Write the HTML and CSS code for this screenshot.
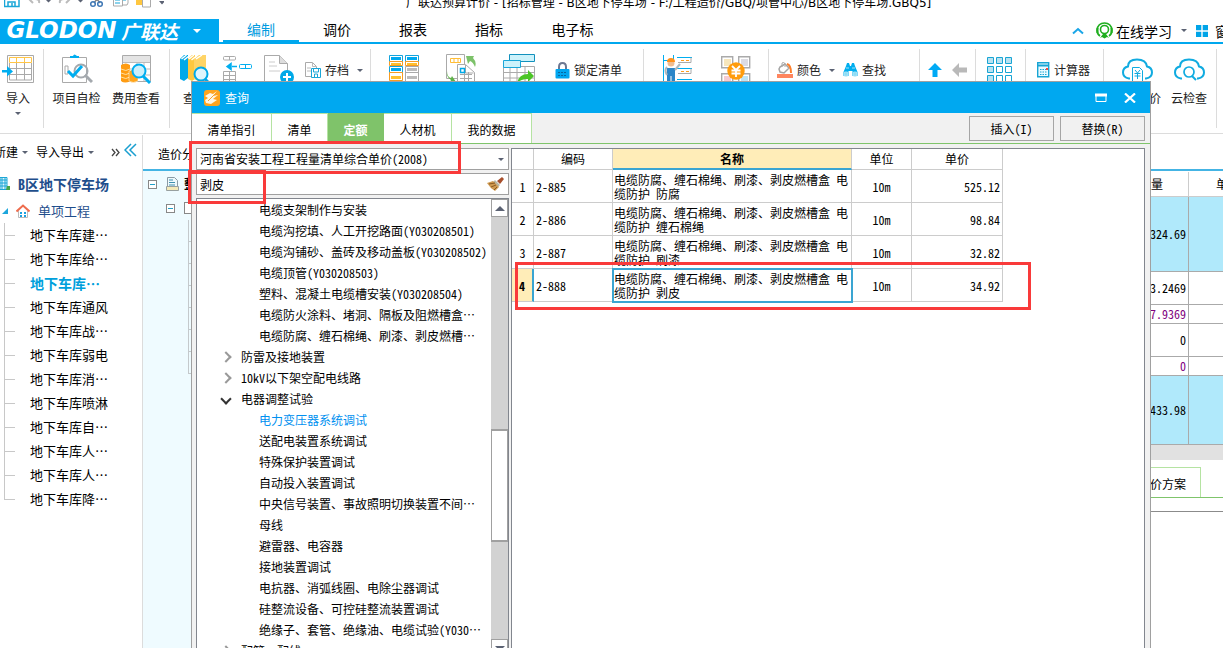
FILE: index.html
```html
<!DOCTYPE html>
<html lang="zh-CN">
<head>
<meta charset="utf-8">
<title>广联达预算计价</title>
<link rel="stylesheet" href="styles.css">
</head>
<body>
<div class="app">
  <header class="titlebar">
    <div class="quick">
      <svg width="160" height="10" viewBox="0 0 160 10" fill="none">
        <path d="M0 -7h15v13.500H0.500V-7" stroke="#19a6d8" stroke-width="1.500"/><path d="M1 -1h13M4 7V2h7v5M8 3v3" stroke="#19a6d8" stroke-width="1.500"/>
        <path d="M26 -1h5q5 0 4 4M29 -3l-3 3l3 3M65 -1h-5q-5 0-4 4M62 -3l3 3l-3 3" stroke="#bbb" stroke-width="2"/>
        <path d="M42 0h5l-2.500 2.500zM74 0h5l-2.500 2.500zM155 1h6l-3 3.500z" fill="#5b6273"/>
        <path d="M90 -5l6 8M96 -5l-6 8" stroke="#888" stroke-width="1.500"/><circle cx="89" cy="4" r="2.300" stroke="#3f78b5" stroke-width="1.500"/><circle cx="96" cy="4" r="2.300" stroke="#3f78b5" stroke-width="1.500"/>
        <path d="M109.500 -2v8h9V-2M118 5h5l1-2V-2" stroke="#aaa"/><path d="M111 0h5M111 3h5M119 0h3" stroke="#19a6d8"/>
        <path d="M132 -2h7v7h-7z" fill="#ffc740"/><path d="M138.500 -2v9h8V-2" stroke="#aaa" fill="#fff"/>
      </svg>
    </div>
    <div class="doc-title">广联达预算计价 - [招标管理 - B区地下停车场 - F:/工程造价/GBQ/项管中心/B区地下停车场.GBQ5]</div>
  </header>

  <nav class="menubar">
    <button class="brand"><span class="brand-en">Glodon</span><span class="brand-cn">广联达</span><i class="caret light"></i></button>
    <button class="menu active">编制</button><button class="menu">调价</button><button class="menu">报表</button><button class="menu">指标</button><button class="menu wide">电子标</button>
    <div class="menu-right">
      <svg width="12" height="8" viewBox="0 0 12 8" fill="none"><path d="M1 6.500L6 2l5 4.500" stroke="#1aa6e8" stroke-width="2"/></svg>
      <svg class="headset" width="17" height="18" viewBox="0 0 17 18" fill="none"><path d="M4 14q-3-2-3-6 1-7 7.500-7T16 8q0 4-3 6" stroke="#1fae1f" stroke-width="1.700"/><circle cx="8.500" cy="7.500" r="4" stroke="#1fae1f" stroke-width="1.600"/><path d="M1.500 6v5M15.500 6v5" stroke="#1fae1f" stroke-width="2"/><path d="M4 16l3-4h3l3 4-2-1-2.500 1.500L6 15z" fill="#1fae1f"/></svg>
      <button class="plain learn">在线学习</button><i class="caret"></i>
      <svg class="win" width="12" height="12" viewBox="0 0 12 12" fill="#00a4e8"><path d="M0 0h5.300v5.300H0zM6.700 0H12v5.300H6.700zM0 6.700h5.300V12H0zM6.700 6.700H12V12H6.700z"/></svg>
      <button class="plain window">窗口</button>
    </div>
  </nav>

  <div class="ribbon">
    <div class="group g-import">
      <button class="tool w36"><svg width="32" height="30" viewBox="0 0 32 30" fill="none"><path d="M5.500 1.500h26v27h-26z" fill="#fff" stroke="#a9a9a9"/><path d="M7.500 3.500h22v5h-22zM14.500 3v6M22.500 3v6" stroke="#ffc547"/><path d="M7.500 9v17h22V9M7 14.500h23M7 20.500h23M14.500 9v17M22.500 9v17" stroke="#a9a9a9"/><path d="M0 16h5v-4l6 5.500-6 5v-4H0z" fill="#00aef0"/></svg><span>导入</span><i class="caret"></i></button>
    </div>
    <div class="group g-check">
      <button class="tool w57"><svg width="32" height="30" viewBox="0 0 32 30" fill="none"><path d="M1.500 3.500h24v25h-24z" stroke="#aaa"/><path d="M9 4V2h3q1-3 4 0h2v2z" fill="#00aef0"/><path d="M4 12h3v8H4z" stroke="#aaa"/><circle cx="20" cy="17" r="6.500" stroke="#a4a9ae" stroke-width="2"/><path d="M24 21l7 7" stroke="#a4a9ae" stroke-width="3"/><path d="M7 17l5 5 9-10" stroke="#00aef0" stroke-width="3"/></svg><span>项目自检</span></button>
      <button class="tool w62"><svg width="32" height="30" viewBox="0 0 32 30" fill="none"><path d="M2.500 1.500h28v26h-28z" stroke="#aaa"/><path d="M3 2h27v6H3z" fill="#e4e4e4"/><path d="M3 8.500h27M17 8v19M24 8v19M3 15h27M3 21h27" stroke="#bbb"/><path d="M1 11q5-3 9 0v16q-5 3-9 0z" fill="#ff9c12"/><path d="M1 15q5 3 9 0M1 19q5 3 9 0M1 23q5 3 9 0" stroke="#ffe0a0"/><path d="M9 17q5-3 9 0v10q-5 3-9 0z" fill="#ffa51b" stroke="#fff" stroke-width=".5"/><circle cx="19" cy="17" r="6.500" fill="#cceffa" stroke="#00aef0" stroke-width="2"/><path d="M23 22l7 7" stroke="#00aef0" stroke-width="3"/></svg><span>费用查看</span></button>
    </div>
    <div class="group g-query">
      <button class="tool w50"><svg width="30" height="30" viewBox="0 0 30 30" fill="none"><path d="M0 5l4-4h4v23l-4 3-4-2z" fill="#00a9e8"/><path d="M8 5l4-4h3v24l-3 2-4-2z" fill="#ffc83e"/><path d="M14 5l5-4h7v22l-8 4-4-2z" fill="#ffd466"/><path d="M1.500 5l5-4M4 6l5-4M9 5l5-4M11.500 6l5-4M16 5l6-4" stroke="#fff" stroke-width="1.500"/><circle cx="21" cy="20" r="6.500" fill="#dff5fc" stroke="#00a9e8" stroke-width="2"/><path d="M25 25l4 4" stroke="#00a9e8" stroke-width="3"/></svg><span>查询</span></button>
      <button class="tool w36" aria-label="插入"><svg width="30" height="30" viewBox="0 0 30 30" fill="none"><rect x=".5" y="2.500" width="12" height="3.500" rx="1" stroke="#aaa"/><path d="M6.500 3v3" stroke="#aaa"/><path d="M.5 17.500h12v12H.5zM6.500 17.500v12M.5 21.500h12M.5 25.500h12" stroke="#aaa"/><path d="M9 12.500h5M4 12.500l4-3v6z" stroke="#00aef0" stroke-width="1.500" fill="#00aef0"/><rect x="16.500" y="10.500" width="12" height="4" rx="1" stroke="#00aef0"/><path d="M22.500 11v3" stroke="#00aef0"/></svg></button>
      <button class="tool w46" aria-label="补充"><svg width="30" height="30" viewBox="0 0 30 30" fill="none"><path d="M.5 28V1.500h15l8 8V28z" fill="#fff" stroke="#aaa"/><path d="M15.500 1.500v8h8" fill="#ddd" stroke="#aaa"/><path d="M5 8h6M5 12h8M5 17h11" stroke="#ccc"/><circle cx="23" cy="23" r="7" fill="#00a9e8"/><path d="M23 19v8M19 23h8" stroke="#fff" stroke-width="2"/></svg></button>
      <button class="small"><svg width="17" height="16" viewBox="0 0 17 16" fill="none"><path d="M1.500 14.500V.5h7l4 4v10z" stroke="#aaa"/><path d="M8.500.5v4h4M3 6h4M3 9h4" stroke="#bbb"/><path d="M7.500 6.500h9v9h-9z" fill="#fff" stroke="#1aa6d8"/><path d="M9.500 7v3h5V7M10.500 15v-3h3v3" stroke="#1aa6d8"/></svg><span>存档</span><i class="caret"></i></button>
    </div>
    <div class="group g-list">
      <button class="tool w66" aria-label="整理清单"><svg width="30" height="30" viewBox="0 0 30 30" fill="none"><path d="M.5 1.500h13v6H.5zM16.500 1.500h13v6h-13zM.5 12.500h13v6H.5z" stroke="#14a4dc"/><path d="M2 3h10v3H2zM18 3h10v3H18zM2 14h10v3H2z" fill="#00a9f0"/><path d="M.5 7.500h13v4H.5zM16.500 7.500h13v4h-13zM.5 18.500h13v8H.5z" stroke="#f79c22"/><path d="M2 9h10v2H2zM18 9h10v2H18zM2 22h10v3H2z" fill="#ffc02e"/><path d="M16.500 12.500h13v17h-13zM16 18.500h14" stroke="#aaa"/><path d="M18 14h10v3H18zM18 22h10v3H18z" fill="#bbb"/></svg></button>
      <button class="tool w48" aria-label="清单转换"><svg width="30" height="30" viewBox="0 0 30 30" fill="none"><path d="M.5.500h18v24H.5z" stroke="#aaa"/><path d="M4.500 4.500h10v4h-10zM8 4v5M12 4v5" stroke="#ffbd36"/><path d="M11.500 10.500h8l9 8v10h-17z" fill="#fff" stroke="#aaa"/><path d="M19.500 11v8h8M14 20.500h12M14 24.500h12M18.500 18v9M22.500 18v9" stroke="#aaa"/><path d="M14.500 14.500h4v4h-4z" stroke="#00a9e8" stroke-width="1.500"/><path d="M20 2h8l-1 2q4 4 2 9-2-5-5-6l-2 3z" fill="#7dc26a"/><path d="M1 17q0 6 4 7l1-2 4 6H4l1-2q-5-3-4-9" fill="#5fb34a"/></svg></button>
      <button class="tool w68" aria-label="导出清单"><svg width="32" height="30" viewBox="0 0 32 30" fill="none"><path d="M.5 12.500h31v17H.5zM7 12v17M14 12v17M22 12v17M0 18.500h32M0 24h32" stroke="#aaa"/><path d="M6.500.500h25v7h-25z" fill="#ccf2fb" stroke="#1291bd"/><path d="M.5 6.500h17v7H.5z" fill="#ccf2fb" stroke="#1aa6d8"/><path d="M25 16l6 6-6 6v-3q-7 0-11 4 2-9 11-9z" fill="#4cc526"/></svg></button>
      <button class="small"><svg width="15" height="17" viewBox="0 0 15 17" fill="none"><path d="M4 8V5q0-4 3.500-4T11 5v3" stroke="#6d7892" stroke-width="2"/><rect x=".5" y="7" width="14" height="9.500" rx="1" fill="#00a6f0"/><path d="M3 10.500h9M3 13.500h9" stroke="#08679f" stroke-dasharray="2 1"/></svg><span>锁定清单</span></button>
    </div>
    <div class="group g-price">
      <button class="tool w68" aria-label="人工"><svg width="30" height="30" viewBox="0 0 30 30" fill="none"><path d="M.5 1v29M10.500 1v5M0 6.500h10" stroke="#00aef0"/><path d="M14 3.500h15M14 14.500h15M14 25.500h15" stroke="#00aef0"/><path d="M15 8.500h13v-5M15 19.500h13v-5" stroke="#aaa"/><path d="M18 6.500h3M23 6.500h3M18 17.500h3M23 17.500h3M18 27.500h3M23 27.500h3" stroke="#ff9d20"/><circle cx="8" cy="9" r="3.500" fill="#efbd91"/><path d="M4 8q0-4 4-4t4 4z" fill="#ff921a"/><path d="M4 14h8v15H4z" fill="#2a86c9"/><path d="M4 13q-3 3 0 8M12 16l5-6" stroke="#aeb8be" stroke-width="2"/><path d="M8 22v8" stroke="#fff"/></svg></button>
      <button class="tool w48" aria-label="载价"><svg width="30" height="30" viewBox="0 0 30 30" fill="none"><path d="M.7 2.700h11v11h-11zM17.700 2.700h11v11h-11zM.7 19.700h11v11h-11zM17.700 19.700h11v11h-11z" stroke="#aaa" stroke-width="1.400"/><path d="M3 5h7v7H3z" fill="#f6e6bc"/><path d="M20 5h7v7h-7z" fill="#dcdbe2"/><path d="M3 22h7v7H3z" fill="#f6cbd2"/><path d="M20 22h7v7h-7z" fill="#bfe4f4"/><circle cx="15" cy="17" r="8.700" fill="#ff9c0c"/><path d="M11 12l4 4 4-4M10.500 16.500h9M10.500 19.500h9M15 16v7" stroke="#fff" stroke-width="1.800"/></svg></button>
    </div>
    <div class="group g-find">
      <button class="small"><svg width="16" height="16" viewBox="0 0 16 16" fill="none"><path d="M0 12h16v4H0z" fill="#ff865f"/><path d="M3 5l5-3 4 4-5 5-4-1-1-3z" fill="#fff" stroke="#a4a4a4" stroke-width="1.500"/><path d="M5 5V1q2-2 3 1v3" stroke="#aaa"/><path d="M10 2q4 1 4 9" stroke="#ff7f2a" stroke-width="2"/></svg><span>颜色</span><i class="caret"></i></button>
      <button class="small binoc"><svg width="15" height="16" viewBox="0 0 15 16" fill="none"><path d="M3 4l1-3h2l1 3h1l1-3h2l1 3 2.500 6v4H9.500V9h-4v5H.500v-4z" fill="#00aeef"/><path d="M1.500 10h3v4h-3zM10.500 10h3v4h-3zM3 6h3M9 6h3" fill="#8ddcf5" stroke="#9fe1f6"/></svg><span>查找</span></button>
    </div>
    <div class="group g-move">
      <button class="icon" aria-label="上移"><svg width="14" height="16" viewBox="0 0 14 16"><path d="M7 1l7 7H9.500v7h-5V8H0z" fill="#00aaf5"/></svg></button>
      <button class="icon" aria-label="左移"><svg width="16" height="16" viewBox="0 0 16 16"><path d="M0 8l7-7v4.500h8v5H7V15z" fill="#b9b9b9"/></svg></button>
    </div>
    <div class="group g-view">
      <button class="tool w48" aria-label="展开"><svg width="26" height="30" viewBox="0 -1 26 30" fill="#fff" stroke="#18a5d4"><path d="M.5 2.500h6v6h-6zM9.500 2.500h6v6h-6zM18.500 2.500h6v6h-6zM.5 11.500h6v6h-6zM.5 20.500h6v6h-6z" fill="#b9e2f1"/><path d="M9.500 11.500h6v6h-6zM18.500 11.500h6v6h-6zM9.500 20.500h6v6h-6zM18.500 20.500h6v6h-6z"/></svg></button>
    </div>
    <div class="group g-calc">
      <button class="small"><svg width="13" height="16" viewBox="0 0 13 16" fill="none"><path d="M.7.700h11v14h-11z" fill="#eafaff" stroke="#18a5d4" stroke-width="1.400"/><path d="M1 3.500h11" stroke="#18a5d4" stroke-width="2"/><path d="M3 7.500h7M3 10h7M3 12.500h7" stroke="#18a5d4" stroke-dasharray="1.500 1"/><path d="M9 6h2v2H9z" fill="#f4463a"/></svg><span>计算器</span></button>
    </div>
    <div class="group g-cloud">
      <button class="tool w66"><svg width="31" height="30" viewBox="0 0 31 30" fill="none"><path d="M8 24.500H7q-6-1-6-6t5-6q0-7 9-7t10 7q5 1 5 6t-6 6h-1" stroke="#10abe0" stroke-width="2"/><path d="M10.500 13.500h7l3 3v12h-10z" fill="#fff" stroke="#10abe0"/><path d="M13 16l2.500 3 2.500-3M12.500 19.500h6M12.500 22h6M15.500 19v6" stroke="#10abe0"/></svg><span>智能组价</span></button>
      <button class="tool w38"><svg width="31" height="30" viewBox="0 0 31 30" fill="none"><path d="M8 24.500H7q-6-1-6-6t5-6q0-7 9-7t10 7q5 1 5 6t-6 6h-1" stroke="#10abe0" stroke-width="2"/><circle cx="15" cy="18" r="5" stroke="#10abe0" stroke-width="1.700"/><path d="M18 22l4 4" stroke="#10abe0" stroke-width="2"/></svg><span>云检查</span></button>
    </div>
  </div>

  <main class="workspace">
    <aside class="sidebar">
      <div class="side-tools"><button class="plain new">新建</button><i class="caret"></i><button class="plain io">导入导出</button><i class="caret"></i>
        <svg class="more" width="9" height="9" viewBox="0 0 9 9" fill="none"><path d="M1 1l3 3.500L1 8M5 1l3 3.500L5 8" stroke="#444" stroke-width="1.300"/></svg>
        <svg class="fold" width="13" height="14" viewBox="0 0 13 14" fill="none"><path d="M7 1L1 7l6 6M12 1L6 7l6 6" stroke="#1a9fd0" stroke-width="1.500"/></svg></div>
      <div class="project root"><svg width="10" height="14" viewBox="0 0 10 14" fill="none"><path d="M0 .500h7v12H0z" fill="#e2f6fc" stroke="#1ba6d6"/><path d="M0 3h7M0 6h7M0 9h7M2 1v11M5 1v11" stroke="#1ba6d6"/><path d="M7 9h3v4H6z" fill="#46a447"/></svg><span>B区地下停车场</span></div>
      <div class="project single"><svg width="6" height="6" viewBox="0 0 6 6"><path d="M6 0v6H0z" fill="#1da6dc"/></svg><svg width="14" height="14" viewBox="0 0 14 14" fill="none"><path d="M2.500 7v6.500h9V7" fill="#fff" stroke="#bbb"/><path d="M.500 7.500L7 1.500l6.500 6" stroke="#ee6c4d" stroke-width="2"/><path d="M4 8h2v2H4zM8 8h2v2H8zM4 11h2v2H4zM8 11h2v2H8z" fill="#1aa0e0"/></svg><span>单项工程</span></div>
      <ul class="units">
        <li>地下车库建…</li><li>地下车库给…</li><li class="current">地下车库…</li><li>地下车库通风</li><li>地下车库战…</li><li>地下车库弱电</li><li>地下车库消…</li><li>地下车库喷淋</li><li>地下车库自…</li><li>地下车库人…</li><li>地下车库人…</li><li>地下车库降…</li>
      </ul>
    </aside>
    <section class="estimate">
      <div class="estimate-tabs"><button class="plain">造价分析</button></div>
      <div class="estimate-body">
        <div class="wbs">
          <div class="wbs-row"><i class="toggle"></i><svg width="13" height="14" viewBox="0 0 13 14" fill="none"><path d="M1.500.500h7l3 3v8h-10z" fill="#eef9fc" stroke="#8a9aa4"/><path d="M3 3h4M3 5.500h6M3 8h6" stroke="#3f8fae"/><path d="M.500 9.500h12v4H.500z" fill="#f3e9b8" stroke="#98a0a0"/></svg><b>整个项目</b></div>
          <div class="wbs-row child"><i class="toggle"></i><i class="sheet"></i></div>
          <ul class="wbs-lines"><li></li><li></li><li></li><li></li><li></li><li></li><li></li></ul>
        </div>
        <div class="amounts">
          <table>
            <thead><tr><th>工程量</th><th>单价</th></tr></thead>
            <tbody>
              <tr class="h75 hot"><td>324.69</td><td></td></tr>
              <tr class="h33"><td>3.2469</td><td></td></tr>
              <tr class="h19 calc"><td>7.9369</td><td></td></tr>
              <tr class="h33"><td>0</td><td></td></tr>
              <tr class="h19 calc"><td>0</td><td></td></tr>
              <tr class="h69 hot"><td>433.98</td><td></td></tr>
            </tbody>
          </table>
          <div class="hscroll"></div>
          <div class="lower-tabs"><button class="plain">单价方案</button></div>
          <div class="lower-gap"></div>
        </div>
      </div>
    </section>
  </main>

  <section class="dialog" role="dialog" aria-label="查询">
    <header class="dialog-title">
      <svg width="16" height="16" viewBox="0 0 16 16" fill="none"><rect width="16" height="16" rx="3" fill="#ffa41c"/><path d="M1 6l5-3 3 1 4-3-4 5 5-1-5 4 4 1-6 4-5-1-1-3 3-2z" fill="#fff6e2"/><path d="M4 11l8-8" stroke="#f3a22b"/></svg>
      <h1>查询</h1>
      <button class="wbtn" aria-label="最大化"><svg width="12" height="10" viewBox="0 0 12 10" fill="none"><path d="M1 1.500h10v7H1z" stroke="#fff"/><path d="M0 2h12" stroke="#fff" stroke-width="3"/></svg></button>
      <button class="wbtn" aria-label="关闭"><svg width="12" height="10" viewBox="0 0 12 10"><path d="M1 .500l10 9M11 .500l-10 9" stroke="#fff" stroke-width="2.200"/></svg></button>
    </header>
    <div class="dialog-tabs">
      <button class="tab">清单指引</button><button class="tab t56">清单</button><button class="tab t56 on">定额</button><button class="tab t68">人材机</button><button class="tab">我的数据</button>
      <div class="actions"><button class="act">插入(I)</button><button class="act">替换(R)</button></div>
    </div>
    <div class="dialog-body">
      <div class="finder">
        <div class="field"><select aria-label="定额库"><option>河南省安装工程工程量清单综合单价(2008)</option></select><i class="caret"></i></div>
        <div class="field"><input type="text" value="剥皮" aria-label="搜索"><svg width="17" height="16" viewBox="0 0 17 16" fill="none"><path d="M10 5l5-4 2 2-4 5z" fill="#a84f2c"/><path d="M8 4l5 5-2 2-5-5z" fill="#b9b7a4"/><path d="M6 5l6 6-4 4Q3 12 0 7z" fill="#d09a50"/><path d="M2 8l6-1M4 11l5-2M7 14l3-3" stroke="#8a5a22"/></svg></div>
        <div class="tree">
          <ul>
            <li class="leaf">电缆支架制作与安装</li><li class="leaf">电缆沟挖填、人工开挖路面(Y030208501)</li><li class="leaf">电缆沟铺砂、盖砖及移动盖板(Y030208502)</li><li class="leaf">电缆顶管(Y030208503)</li><li class="leaf">塑料、混凝土电缆槽安装(Y030208504)</li><li class="leaf">电缆防火涂料、堵洞、隔板及阻燃槽盒…</li><li class="leaf">电缆防腐、缠石棉绳、刷漆、剥皮燃槽…</li>
            <li class="node">防雷及接地装置</li><li class="node">10kV以下架空配电线路</li><li class="node open">电器调整试验</li>
            <li class="leaf picked">电力变压器系统调试</li><li class="leaf">送配电装置系统调试</li><li class="leaf">特殊保护装置调试</li><li class="leaf">自动投入装置调试</li><li class="leaf">中央信号装置、事故照明切换装置不间…</li><li class="leaf">母线</li><li class="leaf">避雷器、电容器</li><li class="leaf">接地装置调试</li><li class="leaf">电抗器、消弧线圈、电除尘器调试</li><li class="leaf">硅整流设备、可控硅整流装置调试</li><li class="leaf">绝缘子、套管、绝缘油、电缆试验(Y030…</li>
            <li class="node">配管、配线</li>
          </ul>
          <div class="vscroll"><i class="arrow up"></i><i class="track before"></i><i class="thumb"></i><i class="track after"></i><i class="arrow down"></i></div>
        </div>
      </div>
      <div class="results">
        <table>
          <colgroup><col class="c-no"><col class="c-code"><col class="c-name"><col class="c-unit"><col class="c-price"></colgroup>
          <thead><tr><th></th><th>编码</th><th class="sorted">名称</th><th>单位</th><th>单价</th></tr></thead>
          <tbody>
            <tr><td>1</td><td>2-885</td><td>电缆防腐、缠石棉绳、刷漆、剥皮燃槽盒 电缆防护 防腐</td><td>10m</td><td>525.12</td></tr>
            <tr><td>2</td><td>2-886</td><td>电缆防腐、缠石棉绳、刷漆、剥皮燃槽盒 电缆防护 缠石棉绳</td><td>10m</td><td>98.84</td></tr>
            <tr><td>3</td><td>2-887</td><td>电缆防腐、缠石棉绳、刷漆、剥皮燃槽盒 电缆防护 刷漆</td><td>10m</td><td>32.82</td></tr>
            <tr class="selected"><td>4</td><td>2-888</td><td>电缆防腐、缠石棉绳、刷漆、剥皮燃槽盒 电缆防护 剥皮</td><td>10m</td><td>34.92</td></tr>
          </tbody>
        </table>
      </div>
    </div>
    <div class="mark mark-library"></div><div class="mark mark-search"></div><div class="mark mark-row"></div>
  </section>
</div>
</body>
</html>
```
FILE: styles.css
```css
* { box-sizing: border-box; }
body { margin: 0; background: #fff; color: #000; font: 12px/14px "Noto Sans Mono CJK SC", "Noto Sans CJK SC", sans-serif; }
button, input, select { font: inherit; color: inherit; }
button { padding: 0; border: 0; background: none; white-space: nowrap; }
ul { margin: 0; padding: 0; list-style: none; }
svg { display: block; flex: none; }
.app { position: relative; height: 100vh; overflow: hidden; display: flex; flex-direction: column; }
.caret { flex: none; width: 0; height: 0; border: 3px solid transparent; border-top-color: #5b6273; border-bottom: 0; }
.caret.light { border-width: 4px; border-top-color: #fff; border-bottom: 0; }

.titlebar { flex: none; height: 19px; display: flex; }
.quick { flex: none; width: 406px; padding-left: 4px; }
.doc-title { margin-top: -6px; font: 12px/18px "DejaVu Sans", "Noto Sans CJK SC", sans-serif; white-space: nowrap; }

.menubar { flex: none; height: 25px; display: flex; border-bottom: 2px solid #00a8ee; font: 14px/20px "Noto Sans CJK SC", sans-serif; }
.brand { width: 219px; margin-right: 4px; display: flex; align-items: center; padding-left: 2px; background: #00a8f0; color: #fff; }
.brand-en { width: 119px; font: italic bold 23px/23px "DejaVu Sans", sans-serif; text-transform: uppercase; }
.brand-cn { width: 72px; font: italic bold 19px/23px "Noto Sans CJK SC", sans-serif; text-align: left; }
.menu { width: 76px; line-height: 18px; padding-bottom: 2px; border-bottom: 2px solid transparent; }
.menu.active { color: #009be0; border-bottom-color: #00a8ee; }
.menu.wide { width: 91px; }
.menu-right { margin-left: auto; flex: none; width: 151px; display: flex; align-items: center; overflow: hidden; }
.headset { margin-left: 12px; }
.learn { margin: 0 9px 0 3px; }
.win { margin: 0 7px 0 9px; }

.ribbon { flex: none; height: 90px; padding-top: 5px; display: flex; border-bottom: 1px solid #dcdcdc; color: #222; }
.group { flex: none; height: 79px; display: flex; align-items: flex-start; border-right: 1px solid #dcdcdc; font-family: "Noto Sans CJK SC", sans-serif; }
.tool { flex: none; height: 79px; padding-top: 5px; display: flex; flex-direction: column; align-items: center; }
.tool span { margin-top: 6px; line-height: 16px; }
.tool .caret { margin-top: 6px; }
.w36 { width: 36px; } .w38 { width: 38px; } .w46 { width: 46px; } .w48 { width: 48px; } .w50 { width: 50px; }
.w57 { width: 57px; } .w62 { width: 62px; } .w66 { width: 66px; } .w68 { width: 68px; }
.small { height: 42px; display: flex; align-items: center; gap: 4px; padding-left: 2px; }
.small .caret { margin-left: 4px; }
.g-import { width: 44px; }
.g-check { width: 126px; padding-left: 4px; }
.g-query { width: 201px; }
.g-list { width: 273px; }
.g-price { width: 125px; }
.g-find { width: 151px; padding-left: 6px; }
.binoc { margin-left: 6px; }
.g-move { width: 56px; padding-left: 8px; gap: 10px; }
.icon { height: 42px; }
.g-view { width: 50px; }
.g-calc { width: 78px; padding-left: 9px; }
.g-cloud { width: 113px; }

.workspace { flex: 1; min-height: 0; display: flex; }
.sidebar { flex: none; width: 143px; margin-top: 1px; border-right: 1px solid #dcdcdc; overflow: hidden; font-family: "Noto Sans CJK SC", sans-serif; }
.side-tools { height: 34px; display: flex; align-items: center; }
.new { margin: 0 4px 0 -6px; }
.io { margin: 0 4px 0 8px; }
.more { margin: 0 4px 0 17px; }
.fold { margin-bottom: 4px; }
.project { display: flex; align-items: center; height: 30px; font-size: 13px; color: #1f4e8c; }
.root { gap: 8px; font: bold 14px/16px "Noto Sans Mono CJK SC", "Noto Sans CJK SC", sans-serif; }
.single { height: 24px; padding-left: 2px; gap: 8px; }
.units { margin-left: 4px; font-size: 13px; }
.units li { height: 24px; display: flex; align-items: center; color: #000; background: linear-gradient(#c8c8c8, #c8c8c8) 0 0 / 1px 100% no-repeat; }
.units li::before { content: ""; width: 11px; height: 1px; margin-right: 15px; background: #c8c8c8; }
.units li:last-child { background-size: 1px 50%; }
.units .current { color: #00a0dc; font-size: 14px; font-weight: bold; }

.estimate { flex: 1; min-width: 0; display: flex; flex-direction: column; }
.estimate-tabs { flex: none; height: 37px; padding: 5px 0 0 15px; display: flex; align-items: center; border-bottom: 2px solid #44b4e4; font-family: "Noto Sans CJK SC", sans-serif; }
.estimate-body { flex: 1; min-height: 0; display: flex; }
.wbs { flex: 1; background: #effbff; padding-top: 1px; }
.wbs-row { height: 24px; padding-left: 5px; display: flex; align-items: center; gap: 9px; }
.wbs-row b { margin-left: -4px; }
.child { padding-left: 23px; }
.toggle { width: 9px; height: 9px; border: 1px solid #888; background: linear-gradient(#20a0c8, #20a0c8) center / 5px 1px no-repeat #fff; }
.sheet { width: 11px; height: 12px; border: 1px solid #888; background: #fff; }
.wbs-lines { margin-left: 45px; }
.wbs-lines li { height: 22px; width: 8px; border-left: 1px solid #c4c9cc; border-bottom: 1px solid #c4c9cc; }
.amounts { flex: none; width: 121px; overflow: hidden; background: #fff; }
.amounts table { width: 166px; table-layout: fixed; border-collapse: separate; border-spacing: 0; margin-top: 1px; }
.amounts th { height: 25px; padding: 0; font-weight: normal; border-right: 1px solid #ccc; border-bottom: 1px solid #ccc; }
.amounts th:first-child { width: 87px; }
.amounts td { padding: 0 2px 0 0; text-align: right; border-right: 1px solid #aaa; border-bottom: 1px solid #aaa; }
.h75 td { height: 75px; } .h69 td { height: 69px; } .h33 td { height: 33px; } .h19 td { height: 19px; }
.calc td { color: #800080; }
.hot td { background: #b0e9fb; }
.hscroll { height: 15px; background: #e1e1e1; }
.lower-tabs { margin-top: 7px; height: 31px; border-bottom: 1px solid #7fc46b; }
.lower-tabs button { width: 99px; height: 30px; padding: 2px 14px 0 0; text-align: right; border: 1px solid #b5e3a2; border-bottom: 0; }
.lower-gap { height: 14px; border-bottom: 1px solid #8b8b8b; }

.dialog { position: absolute; left: 191px; right: 72px; top: 81px; bottom: 0; display: flex; flex-direction: column; border: 1px solid #a0a0a0; border-bottom: 0; background: #f1f1f1; }
.dialog-title { flex: none; height: 31px; padding: 0 14px 0 12px; display: flex; align-items: center; background: #00a8f0; color: #fff; }
.dialog-title h1 { margin: 0 auto 0 5px; font: 12px/16px "Noto Sans CJK SC", sans-serif; }
.wbtn { margin-left: 17px; }
.dialog-tabs { flex: none; height: 31px; display: flex; border-bottom: 1px solid #7fc46b; }
.tab { width: 80px; padding-top: 2px; background: #fff; border: 1px solid #b5e3a2; border-width: 1px 1px 0 0; font-family: "Noto Sans CJK SC", sans-serif; }
.t56 { width: 56px; } .t68 { width: 68px; }
.tab.on { background: #7fc36a; color: #fff; font-weight: bold; border-color: #7fc36a; }
.actions { margin-left: auto; padding: 3px 5px 0 0; display: flex; gap: 6px; }
.act { width: 85px; height: 25px; border: 1px solid #a5a5a5; }
.dialog-body { flex: 1; min-height: 0; padding: 4px 5px 0 4px; display: flex; gap: 2px; }
.finder { flex: none; width: 313px; display: flex; flex-direction: column; gap: 3px; }
.field { flex: none; height: 22px; display: flex; align-items: center; padding-right: 4px; border: 1px solid #a0a0a0; background: #fff; }
.field select, .field input { flex: 1; min-width: 0; height: 20px; padding: 0 0 0 3px; border: 0; outline: 0; background: none; appearance: none; }
.tree { flex: 1; min-height: 0; display: flex; overflow: hidden; border: 1px solid #82868e; border-bottom: 0; background: #fff; }
.tree ul { flex: 1; min-width: 0; }
.tree li { height: 21px; line-height: 21px; white-space: nowrap; }
.leaf { padding-left: 62px; }
.picked { color: #0090f0; }
.node { padding-left: 25px; display: flex; align-items: center; }
.node::before { content: ""; width: 6px; height: 6px; margin-right: 11px; border: solid #999; border-width: 2px 2px 0 0; transform: rotate(45deg); }
.node.open::before { border-color: #333; transform: rotate(135deg); }
.vscroll { flex: none; width: 17px; display: flex; flex-direction: column; background: #d2d2d2; }
.arrow { flex: none; height: 18px; display: grid; place-items: center; border: 1px solid #a0a0a0; background: #fff; }
.arrow::before { content: ""; border: 5px solid transparent; border-top: 0; border-bottom-color: #5b6273; }
.arrow.down { margin-bottom: -9px; }
.arrow.down::before { border: 5px solid transparent; border-bottom: 0; border-top-color: #5b6273; }
.before { flex: 212; }
.after { flex: 97; }
.thumb { flex: none; height: 113px; border: 1px solid #a0a0a0; border-width: 2px 1px; background: #fff; }
.results { flex: 1; min-width: 0; border: 1px solid #82868e; border-bottom: 0; background: #fff; }
.results table { width: 491px; table-layout: fixed; border-collapse: separate; border-spacing: 0; }
.c-no { width: 22px; } .c-code { width: 79px; } .c-name { width: 239px; } .c-unit { width: 60px; } .c-price { width: 91px; }
.results th { height: 21px; padding: 0; font-weight: normal; border-right: 1px solid #ccc; border-bottom: 1px solid #ccc; }
.results th.sorted { background: #ffedb8; font-weight: bold; border-bottom: 2px solid #3aa5d2; }
.results td { height: 33px; padding: 2px 2px 0; text-align: center; border-right: 1px solid #ccc; border-bottom: 1px solid #ccc; }
.results td:nth-child(2), .results td:nth-child(3) { text-align: left; }
.results td:nth-child(3) { padding: 2px 0 0 1px; }
.results td:last-child { text-align: right; }
.results .selected td:first-child { background: #ffedb8; border-right: 2px solid #3aa5d2; font-weight: bold; }
.selected td:nth-child(3) { outline: 2px solid #3aa5d2; outline-offset: -1px; }
.mark { position: absolute; border: 3px solid #f93a3a; pointer-events: none; }
.mark-library { left: -3px; top: 59px; width: 272px; height: 33px; }
.mark-search { left: -4px; top: 88px; width: 78px; height: 34px; }
.mark-row { left: 323px; top: 180px; width: 516px; height: 48px; }
```
